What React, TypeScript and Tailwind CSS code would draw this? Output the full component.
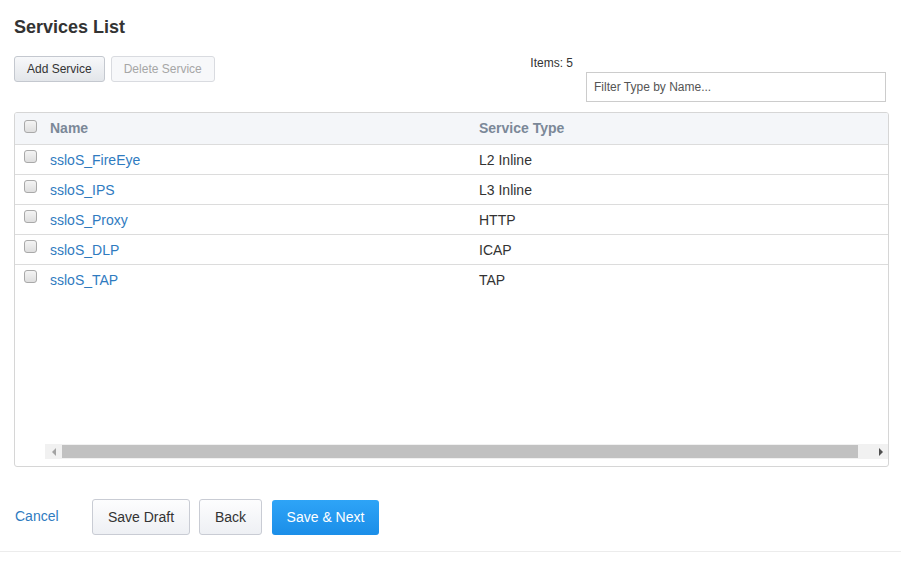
const services = [
  { name: 'ssloS_FireEye', type: 'L2 Inline' },
  { name: 'ssloS_IPS', type: 'L3 Inline' },
  { name: 'ssloS_Proxy', type: 'HTTP' },
  { name: 'ssloS_DLP', type: 'ICAP' },
  { name: 'ssloS_TAP', type: 'TAP' },
];

function Check() {
  return (
    <span className="inline-block w-[13px] h-[13px] rounded-[3px] border border-[#a9a9a9] bg-gradient-to-b from-[#f4f4f4] to-[#dedede]" />
  );
}

export default function App() {
  return (
    <div className="w-[901px] h-[563px] bg-white font-['Liberation_Sans',Arial,sans-serif] text-[#333]">
      <div className="pl-[14px] pr-[12px] pt-[16px]">
        <h1 className="text-[18px] font-bold leading-[22px] text-[#333]">Services List</h1>

        <div className="flex items-start mt-[18px]">
          <div className="flex gap-[6px]">
            <button className="h-[26px] px-[12px] text-[12px] text-[#333] rounded-[3px] border border-[#c4c8cf] bg-gradient-to-b from-[#f7f8fa] to-[#e3e6ea]">
              Add Service
            </button>
            <button className="h-[26px] px-[12px] text-[12px] text-[#a6a6a6] rounded-[3px] border border-[#d9dbe0] bg-[#f7f8fa]">
              Delete Service
            </button>
          </div>
          <div className="ml-auto flex flex-col items-end">
            <div className="text-[12px] leading-[14px] mr-[316px]">Items: 5</div>
            <input
              className="mt-[2px] mr-[3px] w-[300px] h-[30px] border border-[#ccc] px-[7px] text-[12px] placeholder:text-[#555] outline-none"
              placeholder="Filter Type by Name..."
            />
          </div>
        </div>

        <div className="mt-[10px] w-[875px] h-[355px] border border-[#d6d6d6] rounded-[3px] flex flex-col overflow-hidden">
          <div className="flex items-center h-[32px] bg-[#f4f6f9] border-b border-[#dcdcdc] text-[14px] font-bold text-[#7b8898]">
            <div className="w-[35px] pl-[9px] flex items-center pb-[4px]"><Check /></div>
            <div className="w-[429px]">Name</div>
            <div>Service Type</div>
          </div>
          {services.map((s, i) => (
            <div
              key={s.name}
              className={`flex items-center h-[30px] text-[14px] ${i < services.length - 1 ? 'border-b border-[#dcdcdc]' : ''}`}
            >
              <div className="w-[35px] pl-[9px] flex items-center pb-[7px]"><Check /></div>
              <div className="w-[429px] text-[#2f7bbf] pt-[1px]">{s.name}</div>
              <div className="text-[#333] pt-[1px]">{s.type}</div>
            </div>
          ))}
          <div className="flex-1" />
          <div className="ml-[30px] mb-[7px] h-[15px] bg-[#f1f1f1] flex items-center">
            <div className="w-[17px] flex justify-center">
              <span className="w-0 h-0 border-y-[4px] border-y-transparent border-r-[4px] border-r-[#a3a3a3]" />
            </div>
            <div className="w-[796px] h-[13px] bg-[#c1c1c1]" />
            <div className="flex-1 flex justify-end pr-[5px]">
              <span className="w-0 h-0 border-y-[4px] border-y-transparent border-l-[4px] border-l-[#505050]" />
            </div>
          </div>
        </div>

        <div className="flex items-center mt-[32px]">
          <a className="text-[14px] text-[#2f7bbf] ml-[1px] mb-[2px] w-[77px]">Cancel</a>
          <button className="h-[36px] w-[98px] text-[14px] text-[#333] rounded-[3px] border border-[#c9ccd4] bg-gradient-to-b from-[#fdfdfe] to-[#eef0f4]">
            Save Draft
          </button>
          <button className="ml-[9px] h-[36px] w-[63px] text-[14px] text-[#333] rounded-[3px] border border-[#c9ccd4] bg-gradient-to-b from-[#fdfdfe] to-[#eef0f4]">
            Back
          </button>
          <button className="ml-[10px] h-[35px] w-[107px] text-[14px] text-white rounded-[3px] bg-gradient-to-b from-[#2ea4f7] to-[#1b8ee8]">
            Save &amp; Next
          </button>
        </div>
      </div>
      <div className="mt-[16px] border-t border-[#ececec]" />
    </div>
  );
}
